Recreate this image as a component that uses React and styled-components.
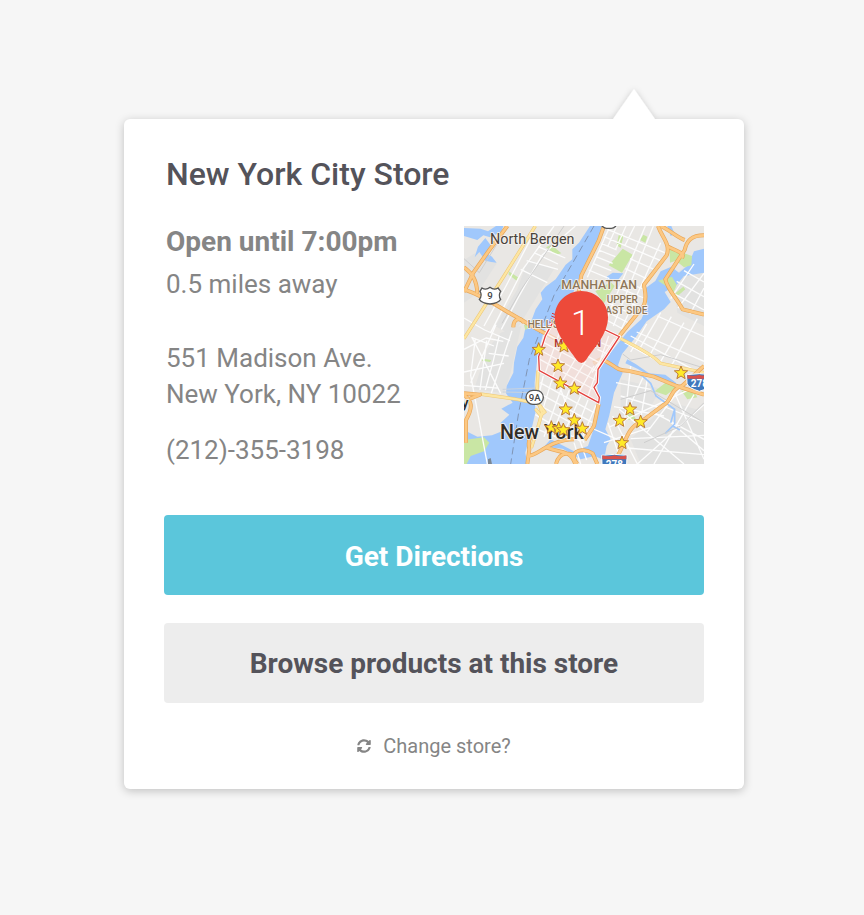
import React from "react";
import styled, { createGlobalStyle } from "styled-components";
import { FaSyncAlt } from "react-icons/fa";

const GlobalStyle = createGlobalStyle`
  *, *::before, *::after { box-sizing: border-box; }
  body {
    margin: 0;
    background: #f6f6f6;
    font-family: Roboto, "Liberation Sans", sans-serif;
    color: #858585;
  }
  h1, p, address { margin: 0; font-style: normal; }
`;

const Page = styled.main`
  display: flex;
  justify-content: center;
  min-height: 100vh;
  padding: 119px 20px 119px 24px;
`;

const Card = styled.section`
  position: relative;
  align-self: flex-start;
  width: 100%;
  max-width: 620px;
  padding: 36px 40px 28px;
  background: #fff;
  border-radius: 6px;
  box-shadow: 0 2px 10px rgba(0, 0, 0, 0.22);
`;

const Arrow = styled.svg`
  position: absolute;
  top: -38px;
  right: 80px;
  width: 60px;
  height: 38px;
`;

const Title = styled.h1`
  padding-left: 2px;
  font-size: 32px;
  line-height: 38px;
  font-weight: 500;
  color: #54535a;
`;

const Overview = styled.div`
  display: flex;
  justify-content: space-between;
  gap: 24px;
  margin-top: 33px;
`;

const Details = styled.div`
  flex: 1;
  padding-left: 2px;
  font-size: 26px;
  line-height: 36px;
`;

const Hours = styled.p`
  font-size: 28px;
  line-height: 32px;
  font-weight: 700;
`;

const Distance = styled.p`
  margin-top: 8px;
`;

const Address = styled.address`
  margin-top: 38px;
`;

const Phone = styled.a`
  display: block;
  margin-top: 20px;
  color: inherit;
  text-decoration: none;
`;

const MapFrame = styled.svg`
  display: block;
  flex: none;
  width: 240px;
  height: 238px;
  font-family: Roboto, "Liberation Sans", sans-serif;
`;

const Actions = styled.div`
  display: grid;
  gap: 28px;
  margin-top: 47px;
`;

const Button = styled.button`
  height: 80px;
  padding: ${(p) => (p.$primary ? "4px" : "2px")} 16px 0;
  border: 0;
  border-radius: 4px;
  font: 700 28px/36px Roboto, "Liberation Sans", sans-serif;
  color: ${(p) => (p.$primary ? "#fff" : "#54535a")};
  background: ${(p) => (p.$primary ? "#5bc6db" : "#ededed")};
  cursor: pointer;
`;

const ChangeStore = styled.a`
  display: flex;
  align-items: center;
  justify-content: center;
  gap: 12px;
  margin-top: 28px;
  font-size: 20px;
  line-height: 30px;
  color: #858585;
  text-decoration: none;
`;

const starPoints = Array.from({ length: 10 }, (_, i) => {
  const r = i % 2 ? 9 : 21;
  const a = (Math.PI / 5) * i - Math.PI / 2;
  return `${(r * Math.cos(a)).toFixed(1)},${(r * Math.sin(a)).toFixed(1)}`;
}).join(" ");

const stars = [
  [224, 371], [300, 361], [282, 420], [289, 472], [331, 488], [305, 550],
  [331, 583], [262, 605], [284, 608], [298, 612], [355, 608], [498, 550],
  [467, 584], [530, 588], [474, 651], [651, 441],
];

const water = [
  "M378 0 345 50 325 70 325 100 305 116 275 160 245 182 230 200 235 220 215 250 200 290 184 306 178 335 160 362 150 410 148 440 128 480 126 502 146 530 112 548 136 566 110 590 114 616 84 628 40 632 0 612V714H190L184 680 200 620 214 560 212 470 222 380 240 315 322 214 352 140 400 44 420 0Z",
  "M720 68 690 76 672 118 645 140 622 122 590 136 574 165 545 186 550 238 532 280 490 318 448 370 408 418 398 470 408 535 392 600 372 660 330 676 260 640 240 662 296 668 350 700 392 690 420 702 428 660 440 640 424 610 436 568 450 500 476 440 462 418 474 384 516 332 548 286 600 250 620 228 602 198 638 176 660 150 720 140Z",
  "M0 30 40 42 58 28 78 34 112 18 118 0H96L72 16 50 8 0 6Z",
  "M64 36 80 58 66 80 84 92 98 110 82 108 64 104 46 78 32 94 42 62Z",
  "M428 152 446 140 478 142 462 162 430 164Z",
  "M484 412 520 428 562 452 602 462 640 482 636 470 604 446 555 442 515 414 490 400Z",
  "M622 0 632 24 620 30 610 0Z",
];

const parks = [
  "M476 68 506 86 474 140 434 118Z",
  "M394 196 440 168 452 180 420 232Z",
  "M538 26 550 32 544 50 528 42Z",
  "M262 56 292 82 276 86 246 64Z",
  "M616 60 650 78 684 90 682 118 660 124 636 104 618 110Z",
  "M582 164 624 152 638 176 626 206 606 180Z",
  "M628 206 658 182 664 190 634 216Z",
  "M572 496 612 464 640 482 606 508Z",
  "M652 494 690 496 700 514 670 520Z",
  "M486 568 502 560 516 578 494 582Z",
  "M0 642 60 634 76 650 60 676 20 690 8 714H0Z",
  "M134 136 162 154 158 164 134 146Z",
  "M478 30 470 66 458 58 464 28Z",
  "M180 298 196 288 200 302 184 312Z",
  "M54 398 82 402 78 408 54 404Z",
];

const blocks = [
  "M0 102 52 70 98 112 40 202 0 230Z",
  "M192 100 270 130 226 200 146 330 94 300 160 190Z",
  "M628 150 720 76 720 300 640 260Z",
  "M110 320 172 300 140 440 120 502 30 490 70 370Z",
  "M470 460 590 488 550 560 470 570Z",
  "M616 528 720 556V714H530L500 640Z",
];

const highways = [
  "M0 124C24 142 38 160 40 202 M130 0 76 72 28 140 0 198",
  "M0 190C70 214 106 246 156 272L220 310 300 352",
  "M148 304C148 278 168 272 180 290",
  "M420 0 404 44 352 148 344 198",
  "M582 0C596 38 620 54 608 88L540 176C542 198 550 210 540 238L466 330",
  "M590 0C620 14 640 34 662 42",
  "M612 62C650 80 662 82 654 96",
  "M720 28C682 28 668 44 662 72L604 160C610 190 638 216 656 250L720 266",
  "M388 412 410 400C450 410 450 434 490 434L570 452 638 480 720 506",
  "M720 420 654 480C620 486 620 530 600 536L530 588C492 604 488 640 464 684L456 714",
  "M404 534 390 600 362 642",
  "M190 714 196 670C190 640 198 632 218 620 M190 690C220 692 252 642 330 640 M246 664C296 684 318 670 334 714 M340 714C310 680 350 660 386 682L400 714 M276 714C288 670 322 684 334 688",
  "M0 506C24 526 28 542 6 582V650 M0 502 48 506 18 518",
];

const yellowRoads = [
  "M214 0 120 150 0 338",
  "M48 504 160 520 226 534",
  "M460 332C510 360 560 380 590 412L720 440",
  "M222 434 218 514 234 560 220 610 202 666",
  "M226 536 242 558 230 568 214 548",
];

const lightRoads = [
  "M34 338 20 448 70 714 M0 276 62 312 138 344 M60 300 126 180 210 20 M80 320 178 128 270 0 M112 310 162 216 234 88 334 0 M96 296 20 470 M144 314 82 502 M170 130 250 170 M188 104 282 130 M222 62 304 96 M210 80 282 114 M24 334 110 502 M0 438 120 412 M0 370 66 336 118 346 M0 478 100 486 M74 382 134 390 M90 360 22 334 M68 344 48 492 M106 328 88 404 64 492",
  "M374 132 436 158 M386 112 442 134 M396 92 446 112 M404 72 454 92 M412 52 458 72 M420 32 590 104 M430 10 602 80 M498 98 574 132 M484 128 552 160 M466 160 540 190 M454 182 540 216 M442 206 530 244 M430 230 516 270 M422 254 500 294 M420 278 482 312 M438 0 370 154 M458 0 432 60 M486 0 454 72 M512 0 482 60 M544 0 422 292 M568 0 448 300 M590 50 472 310",
  "M720 142 642 246 M720 186 678 264 M660 134 720 168 M638 166 720 212 M624 200 720 252 M690 114 620 218 M500 330 720 448 M548 294 500 378 M590 260 526 370 M622 272 556 390 M660 290 590 406 M700 278 624 416 M518 318 720 406 M580 270 720 332 M482 350 600 416 M500 420 480 600 M540 448 488 560 M470 510 590 546 M450 542 600 570",
  "M434 604 720 470 M432 590 474 714 M446 570 520 714 M466 550 660 714 M570 560 720 640 M596 540 720 590 M720 536 520 714 M690 506 570 714 M650 486 548 620 M720 674 610 580 M632 500 720 700 M420 650 560 604 M500 638 720 628 M490 666 720 686 M456 470 560 490 M550 458 530 580",
  "M238 450 216 540 M264 460 206 650 M296 476 240 632 M316 492 274 602 M350 510 292 640 M372 522 326 640 M396 538 350 646 M228 470 390 560 M222 500 386 590 M220 534 374 620 M214 566 350 646 M206 604 294 640 M290 490 320 570 360 650 M368 600 460 640 M330 650 350 714 M346 640 368 702",
];

const midtownStreets =
  "M250 325 410 412 M240 350 398 435 M233 375 394 462 M228 400 392 492 M290 310 244 440 M312 320 266 454 M340 390 292 470 M366 404 316 484 M390 420 344 500 M434 330 372 510 M452 338 384 440 M410 350 448 366 M400 370 436 386";

const midtown =
  "M268 286 244 330 224 392 226 434 404 530 406 514 390 484 400 470 402 430 466 332 420 310Z";

function Paths({ items, ...rest }) {
  return (
    <g {...rest}>
      {items.map((d) => (
        <path key={d} d={d} />
      ))}
    </g>
  );
}

function RouteShield({ x, y }) {
  return (
    <g transform={`translate(${x} ${y})`}>
      <path
        d="M-38-18Q0-24 38-18L37 8Q34 22 0 32Q-34 22-37 8Z"
        fill="#3f78bd"
        stroke="#fff"
        strokeWidth="3"
      />
      <path d="M-36-18Q-18-12 0-18Q18-12 36-18V-6H-36Z" fill="#d8524c" />
      <text y="20" textAnchor="middle" fontSize="30" fontWeight="700" fill="#fff">
        278
      </text>
    </g>
  );
}

function StoreMap() {
  return (
    <MapFrame viewBox="0 0 720 714" role="img" aria-label="Map of New York City with the store location">
      <rect width="720" height="714" fill="#e9e7e4" />
      <Paths items={blocks} fill="#e2e2e1" />
      <Paths items={water} fill="#a0c8fc" />
      <Paths items={parks} fill="#c9e6a4" />
      <Paths items={lightRoads} fill="none" stroke="#fcfcfc" strokeWidth="4" strokeLinejoin="round" />
      <g fill="none" stroke="#a0c8fc" strokeWidth="5">
        <path d="M456 440C500 420 532 444 560 472L576 510 632 550 620 590M632 552V594L604 622M626 600 648 612" />
      </g>
      <g fill="none" stroke="#cecece" strokeWidth="3">
        <path d="M0 98 46 140 132 0M114 292 172 190 300 0M476 384 500 402 590 386 720 426M470 520 560 494 720 590M540 650 650 600 720 530" />
      </g>
      <path d="M390 0 270 208 196 400 164 560 140 714" fill="none" stroke="#8095b5" strokeWidth="3" strokeDasharray="22 12" />
      <path d="M116 490 222 486M116 498 222 500" fill="none" stroke="#cbd3dd" strokeWidth="3" />
      <Paths items={yellowRoads} fill="none" stroke="#edc777" strokeWidth="10" />
      <Paths items={yellowRoads} fill="none" stroke="#fde6a2" strokeWidth="7" />
      <Paths items={highways} fill="none" stroke="#e9a758" strokeWidth="12" strokeLinejoin="round" />
      <Paths items={highways} fill="none" stroke="#fcc883" strokeWidth="8" strokeLinejoin="round" />

      <path d={midtown} fill="#f3dcd8" fillOpacity="0.75" />
      <path d={midtownStreets} fill="none" stroke="#fff" strokeOpacity="0.75" strokeWidth="4" />
      <path d={midtown} fill="none" stroke="#fff" strokeWidth="9" />
      <path d={midtown} fill="none" stroke="#e4413d" strokeWidth="4" />
      <path d="M264 262l14 5M262 270l14 6M260 278l14 6M256 288l14 6M252 298l12 6" stroke="#d93433" strokeWidth="3" />

      <g stroke="#f6f3ee" strokeWidth="5" strokeLinejoin="round" paintOrder="stroke">
        <text x="78" y="54" fontSize="43" fill="#49423b">North Bergen</text>
        <g fill="#8d7658" fontWeight="500">
          <text x="292" y="188" fontSize="37">MANHATTAN</text>
          <text x="428" y="231" fontSize="30">UPPER</text>
          <text x="407" y="265" fontSize="30">EAST SIDE</text>
          <text x="191" y="307" fontSize="30">HELL'S</text>
        </g>
        <text x="271" y="363" fontSize="30" fontWeight="700" fill="#b43b36">MIDTOWN</text>
        <text x="108" y="640" fontSize="59" fontWeight="500" fill="#302d29">New York</text>
        <text x="-8" y="545" fontSize="45" fontWeight="500" fill="#302d29">y</text>
      </g>

      <path d="M54 186Q66 194 78 184Q90 194 102 186L110 196Q102 208 110 220Q102 232 78 234Q54 232 46 220Q56 208 48 196Z" fill="#fff" stroke="#555" strokeWidth="4" />
      <text x="78" y="220" textAnchor="middle" fontSize="29" fontWeight="500" fill="#444">9</text>
      <rect x="186" y="493" width="52" height="42" rx="21" fill="#fff" stroke="#555" strokeWidth="4" />
      <text x="212" y="524" textAnchor="middle" fontSize="29" fontWeight="500" fill="#444">9A</text>
      <rect x="412" y="-30" width="46" height="37" rx="16" fill="#fff" stroke="#555" strokeWidth="4" />
      <path d="M72 700 80 696 84 714H72Z" fill="#7b8794" />
      <RouteShield x={706} y={464} />
      <RouteShield x={451} y={706} />

      {stars.map(([x, y]) => (
        <polygon
          key={`${x}-${y}`}
          points={starPoints}
          transform={`translate(${x} ${y})`}
          fill="#ffe928"
          stroke="#bd7b3a"
          strokeWidth="3"
          strokeLinejoin="round"
        />
      ))}

      <path
        d="M352 195C307 195 272 230 272 274C272 324 314 366 338 402Q352 420 366 402C390 366 432 324 432 274C432 230 397 195 352 195Z"
        fill="#ed4a3a"
      />
      <text x="350" y="326" textAnchor="middle" fontSize="104" fontWeight="300" fill="#fff">1</text>
    </MapFrame>
  );
}

export default function App() {
  return (
    <>
      <GlobalStyle />
      <Page>
        <Card>
          <Arrow viewBox="0 0 60 38" aria-hidden="true">
            <defs>
              <filter id="arrow-shadow" x="-30%" y="-30%" width="160%" height="160%">
                <feDropShadow dx="0" dy="1" stdDeviation="3" floodColor="#000" floodOpacity="0.2" />
              </filter>
            </defs>
            <path d="M9 38 30 8 51 38Z" fill="#fff" filter="url(#arrow-shadow)" />
          </Arrow>
          <Title>New York City Store</Title>
          <Overview>
            <Details>
              <Hours>Open until 7:00pm</Hours>
              <Distance>0.5 miles away</Distance>
              <Address>
                551 Madison Ave.
                <br />
                New York, NY 10022
              </Address>
              <Phone href="tel:+12123553198">(212)-355-3198</Phone>
            </Details>
            <StoreMap />
          </Overview>
          <Actions>
            <Button type="button" $primary>Get Directions</Button>
            <Button type="button">Browse products at this store</Button>
          </Actions>
          <ChangeStore href="#stores">
            <FaSyncAlt size={14} aria-hidden="true" />
            Change store?
          </ChangeStore>
        </Card>
      </Page>
    </>
  );
}
